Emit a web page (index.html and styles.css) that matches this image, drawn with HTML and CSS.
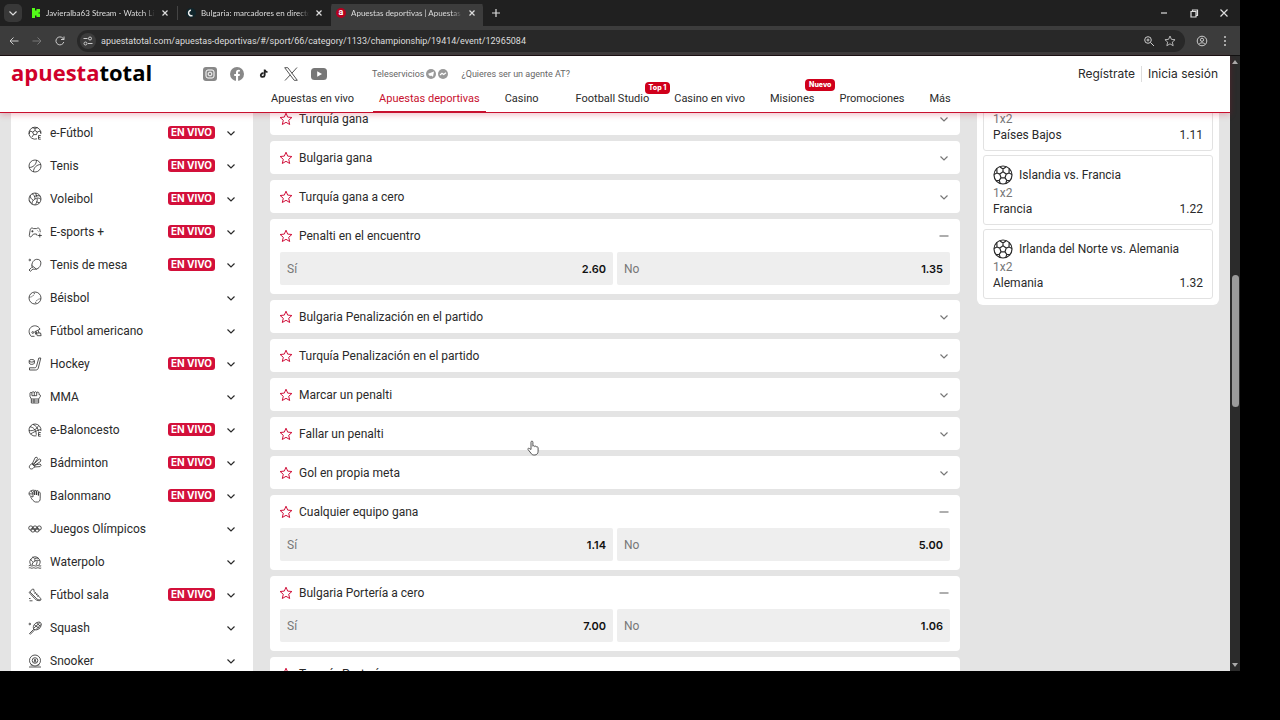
FILE: index.html
```html
<!DOCTYPE html>
<html lang="es">
<head>
<meta charset="UTF-8">
<meta name="viewport" content="width=device-width, initial-scale=1.0">
<title>Apuestas deportivas | Apuesta Total</title>
<link rel="stylesheet" href="styles.css">
</head>
<body>
    <!-- Icon shapes -->
    <svg class="sprite" aria-hidden="true">
        <symbol id="chevron" viewBox="0 0 10 10"><path d="M1.500 3.500 5 7l3.500-3.500"/></symbol>
        <symbol id="minus" viewBox="0 0 10 10"><path d="M.5 5h9"/></symbol>
        <symbol id="close" viewBox="0 0 10 10"><path d="m2.500 2.500 5 5m0-5-5 5"/></symbol>
        <symbol id="star" viewBox="0 0 14 14"><path d="m7 1.200 1.700 3.900 4.200.4-3.200 2.800 1 4.200L7 10.300l-3.700 2.200 1-4.200L1.100 5.500l4.200-.4z"/></symbol>
        <symbol id="football" viewBox="0 0 20 20"><circle cx="10" cy="10" r="9"/><path d="m10 6.800 3.200 2.300-1.200 3.700H8L6.800 9.100zM10 6.800V4m3.200 5.100L16 8m-4 4.800 1.800 2.600M8 12.800l-1.800 2.600M6.800 9.100 4 8M6.700 1.700 10 4l3.300-2.300M1 9.500 4 8l-.2-4.500m12.400 0L16 8l3 1.500m-2 6-3.200-.1-1.100 3.200m-5.400 0-1.100-3.200-3.200.1"/></symbol>
        <symbol id="s-efootball" viewBox="0 0 14 14"><path d="M9 12.800A6 6 0 1 1 12.900 8M7 4.500 9.300 6l-.8 2.600H5.600L4.700 6zM7 4.500V2.300M4.700 6 2 5m3.600 3.600L4 11m5.300-5L12 5M4.300 1.700 7 2.300l2.700-.6M1 8l1-3m10 0 .8 2M12.800 9.500h-2.300v3.700h2.300m-2.300-1.800h2"/></symbol>
        <symbol id="s-tennis" viewBox="0 0 14 14"><circle cx="7" cy="7" r="6"/><path d="M1.200 8.500C5 8.500 8.500 5.500 8.500 1.200M5.500 12.800c0-4.300 3.500-7.300 7.300-7.300"/></symbol>
        <symbol id="s-volley" viewBox="0 0 14 14"><circle cx="7" cy="7" r="6"/><path d="M7 7c0-2.500-1-4.500-3-5.200M7 7c2.200-1.300 4.500-1.300 6 .5M7 7c-2.200 1.300-3.400 3.300-2.800 5.300M6.500 4.500C8.500 3.200 11 3.300 12.300 4.500M9.200 6.800c.3 2.500-.7 4.500-2.400 6M5.300 8.300C3.200 7.200 2 5.300 2.400 3.400M9 5.200 7.600 1.100M8.300 9.800l3.200 1M3 10.800 1.200 8.500"/></symbol>
        <symbol id="s-esports" viewBox="0 0 14 14"><path d="M9 10.500 8.500 9h-3L3.300 11.600c-.9.700-2.200.2-2-1.200l.8-5C2.300 3.700 3 3 4.200 3l1.300.6h3L9.800 3c1.200 0 2 .7 2.200 2.400l.3 1.800M3.300 6.300h2.200M4.400 5.200v2.200M9 5.500h.4m.8 1.200h.4M11.800 8.500v4M9.800 10.500h4"/></symbol>
        <symbol id="s-table" viewBox="0 0 14 14"><circle cx="1.800" cy="2" r=".8"/><path d="M4.500 10C2.800 7 4.600 1.700 8.700 1.300c3.100-.2 4.600 2 4.100 4.700-.6 3.800-4.300 6.200-7.800 5L2.300 13.300 1 12l2.600-2.500M3.600 7.300l5 4"/></symbol>
        <symbol id="s-baseball" viewBox="0 0 14 14"><circle cx="7" cy="7" r="6"/><path d="M1.300 6.200c2.900 0 5-1.900 5.300-5M12.700 7.800c-2.900 0-5 1.900-5.300 5" stroke-dasharray="1.200 .8"/></symbol>
        <symbol id="s-nfl" viewBox="0 0 14 14"><path d="M6.500 12.300H3.200C.5 9.500.5 5.700 2.700 3.500 5.500.8 10.300 1.300 12 5.200L6.800 7.700l1.200 3M8 7.200l1.200 4.500h3.900l-.5-2.700H7.500m2.700-2.600.8 2.600"/><circle cx="4.800" cy="8.500" r=".9"/></symbol>
        <symbol id="s-hockey" viewBox="0 0 14 14"><path d="M10.800 1h2L10.300 11c-.4 1.500-1.200 2-2.700 2H1.500v-2.200h5c1.100 0 1.700-.4 2-1.500z"/><ellipse cx="3.800" cy="3.800" rx="2.600" ry="1.300"/><path d="M1.200 3.800v2.300c0 1.700 5.200 1.700 5.200 0V3.800"/></symbol>
        <symbol id="s-mma" viewBox="0 0 14 14"><path d="M3.300 9 2 6.500V3.200c0-1 1.800-1.200 1.900 0 0-2 2.400-2 2.400 0 0-2 2.400-2 2.400 0 .1-1.600 2.300-1.400 2.300.2v1.300h.7c1 0 1 2 0 2.700L10.700 9zM3.900 3.200v2.500m2.400-2.500v2.500m2.400-2.500v2.500H4M3.300 9v4h7.400V9M3.300 11h7.400M6 9v4"/></symbol>
        <symbol id="s-ebasket" viewBox="0 0 14 14"><path d="M8.500 12.800A6 6 0 1 1 12.900 8M2 3.800c3 .2 6.300 3 6.300 8M1 7.500c4.500.8 8-1.500 9.500-5M5 1.400c2.800 1.200 5 3.500 5.500 7M2.500 11C5 9.500 8.500 7.500 12.800 6.500M12.800 9.500h-2.300v3.700h2.300m-2.300-1.800h2"/></symbol>
        <symbol id="s-badminton" viewBox="0 0 14 14"><path d="M4 8.300 7.200 1.600l1.700-.4.700 1.400L5.200 9m1-1.300L11.300 3l1.500.8-.3 1.700L6 9.700m1.300-.8 4.900-.9.900 1.300-1 1.300-6 .4M3.600 7.700l3.100 3-1.500 1.600c-2.400 2-5.200-.7-3.200-3zM4.600 7l2.800 3"/></symbol>
        <symbol id="s-handball" viewBox="0 0 14 14"><path d="M5 8V3.200c0-1.200 1.700-1.200 1.700 0V6 2.300c0-1.200 1.900-1.200 1.900 0V6 2.500c0-1.200 1.800-1.200 1.800 0V6.500 4c0-1.200 1.800-1.200 1.800 0v5.600c0 2-1 3.400-2.600 3.400H7.400C6 13 3.500 9.800 3 8.700c-.6-1.200.7-1.800 1.300-1zM3.200 7.500C.5 6.500.4 3.300 2.500 2c1.800-1.200 4-1 5 0M1.200 4.800 5 5M3 2l2 2.500"/></symbol>
        <symbol id="s-olympic" viewBox="0 0 14 14"><circle cx="2.800" cy="6" r="2.100"/><circle cx="7" cy="6" r="2.100"/><circle cx="11.200" cy="6" r="2.100"/><circle cx="4.900" cy="8" r="2.100"/><circle cx="9.100" cy="8" r="2.100"/></symbol>
        <symbol id="s-waterpolo" viewBox="0 0 14 14"><path d="M3 10a5 5 0 1 1 8 0M7 6c0-2-1-3.500-2.500-4M7 6c2-1 3.600-1 4.800 0M7 6C5 7 4 8.500 4.200 10.300M7 3.600c1.400-.7 2.700-.7 3.700-.2M9 5.600c.3 1.700-.2 3.300-1 4.400M5.300 7C4 6.400 3 5.200 2.700 4M.8 10.800c1.500-1.200 2.500 1 4 0s2.500 1 4 0 2.700 1 4.400 0M.8 13c1.500-1.200 2.500 1 4 0s2.500 1 4 0 2.700 1 4.400 0"/></symbol>
        <symbol id="s-shoe" viewBox="0 0 14 14"><path d="M1.300 4.500 4.500 1l1.300.3.400 2.300 5.900 6.200c1.300 1.200 1 2.700-.4 2.800-2.200.2-3.600-.5-5-2L2 5.500zM1.800 3.900l7 6.900c1 1 2.300 1.100 3.700.9M6.500 5.500l1.300-1M8 7l1.300-1M9.400 8.500l1.200-1M1 10.500h1.500M1.500 12.800h3"/></symbol>
        <symbol id="s-squash" viewBox="0 0 14 14"><circle cx="1.800" cy="3" r=".8"/><path d="M5.800 8.200c-1-1.700-.4-4 1.300-5.500 2-1.800 4.600-2 5.500-1 1.100 1 .7 3.600-1 5.500-1.600 1.700-4 2.300-5.800 1zM5.800 8.200 5 9 1.500 12.500M6.600 8.900l-.8.900L2.300 13.300l-.8-.8M6.500 4l5 3.500M8.500 2l4 3.300M6 7l6-5.500M8 8.500l5-5"/></symbol>
        <symbol id="s-snooker" viewBox="0 0 14 14"><circle cx="7" cy="6.500" r="5.500"/><circle cx="7" cy="6.500" r="2.800"/><circle cx="7" cy="5.900" r=".7"/><circle cx="7" cy="7.400" r=".8"/><path d="M1 13h12M2.500 11h2m5 0h2"/></symbol>
    </svg>

    <div class="window">
        <!-- Browser tabs -->
        <div class="tab-bar">
            <button class="tab-search" aria-label="Buscar pestañas"><svg class="ic-sm"><use href="#chevron"/></svg></button>
            <div class="tab">
                <svg class="favicon" viewBox="0 0 10 10"><path fill="#53fc18" d="M1 0h3v2.500h1.500V1H9v3.500H7.500v1H9V9H5.500V7.500H4V10H1z"/></svg>
                <span class="tab-title">Javieralba63 Stream - Watch Li</span>
                <button class="tab-close" aria-label="Cerrar"><svg class="ic-sm"><use href="#close"/></svg></button>
            </div>
            <div class="tab tab-divided">
                <svg class="favicon" viewBox="0 0 10 10"><circle cx="5" cy="5" r="5" fill="#10252b"/><path fill="none" stroke="#eee" stroke-width="1.500" d="M6.500 7.500C4 8.500 2.400 6.500 2.600 4.500 2.800 3 4 2.200 5 2.400"/></svg>
                <span class="tab-title">Bulgaria: marcadores en directo</span>
                <button class="tab-close" aria-label="Cerrar"><svg class="ic-sm"><use href="#close"/></svg></button>
            </div>
            <div class="tab tab-active">
                <span class="favicon favicon-a">a</span>
                <span class="tab-title">Apuestas deportivas | Apuestas</span>
                <button class="tab-close" aria-label="Cerrar"><svg class="ic-sm"><use href="#close"/></svg></button>
            </div>
            <button class="tab-new" aria-label="Nueva pestaña"><svg class="ic-sm" viewBox="0 0 10 10"><path d="M5 1v8M1 5h8"/></svg></button>
            <div class="window-controls">
                <button aria-label="Minimizar"><svg class="ic-sm" viewBox="0 0 10 10"><path d="M2 5h6"/></svg></button>
                <button aria-label="Restaurar"><svg class="ic-sm" viewBox="0 0 10 10"><path d="M2 3.500h5V9H2zM3.500 3.500V2h5v5.500H7"/></svg></button>
                <button aria-label="Cerrar ventana"><svg class="ic-sm" viewBox="0 0 10 10"><path d="m1.500 1.500 7 7m0-7-7 7"/></svg></button>
            </div>
        </div>

        <!-- Address bar -->
        <div class="address-bar">
            <button aria-label="Atrás"><svg class="ic-md" viewBox="0 0 12 12"><path d="M10.500 6H2m3.500-3.500L2 6l3.500 3.500"/></svg></button>
            <button class="is-dim" aria-label="Adelante"><svg class="ic-md" viewBox="0 0 12 12"><path d="M1.500 6H10M6.500 2.500 10 6 6.500 9.500"/></svg></button>
            <button aria-label="Recargar"><svg class="ic-md" viewBox="0 0 12 12"><path d="M9.800 7A4 4 0 1 1 9 3.300l1 1M10 1.500v3H7"/></svg></button>
            <div class="url-box">
                <span class="site-info"><svg class="ic-md" viewBox="0 0 12 12"><path d="M1.500 3.500h4M6 8.500h4.500"/><circle cx="8" cy="3.500" r="1.500"/><circle cx="3.500" cy="8.500" r="1.500"/></svg></span>
                <input class="url" type="text" aria-label="Dirección" value="apuestatotal.com/apuestas-deportivas/#/sport/66/category/1133/championship/19414/event/12965084">
                <button aria-label="Zoom"><svg class="ic-md" viewBox="0 0 12 12"><circle cx="5" cy="5" r="3.300"/><path d="m7.500 7.500 3.500 3.500M3.500 5h3M5 3.500v3"/></svg></button>
                <button aria-label="Marcador"><svg class="ic-md"><use href="#star"/></svg></button>
            </div>
            <button aria-label="Perfil"><svg class="ic-md" viewBox="0 0 12 12"><circle cx="6" cy="6" r="4.800"/><circle cx="6" cy="4.800" r="1.600"/><path d="M2.800 9.300c1.500-2 4.900-2 6.400 0"/></svg></button>
            <button aria-label="Menú"><svg class="ic-md ic-dots" viewBox="0 0 12 12"><circle cx="6" cy="2" r="1"/><circle cx="6" cy="6" r="1"/><circle cx="6" cy="10" r="1"/></svg></button>
        </div>

        <div class="viewport">
            <div class="site">
                <!-- Site header -->
                <header class="header">
                    <a class="logo" href="#"><span>apuesta</span>total</a>
                    <div class="header-center">
                        <div class="header-top">
                            <a href="#" aria-label="Instagram"><svg class="social" viewBox="0 0 14 14"><rect width="14" height="14" rx="3" fill="#888"/><rect x="3" y="3" width="8" height="8" rx="2" fill="none" stroke="#fff"/><circle cx="7" cy="7" r="1.900" fill="none" stroke="#fff"/></svg></a>
                            <a href="#" aria-label="Facebook"><svg class="social" viewBox="0 0 14 14"><circle cx="7" cy="7" r="7" fill="#888"/><path fill="#fff" d="M6 14V9H4.200V7H6V5.500C6 3.700 7 2.800 8.600 2.800l1.300.1v1.700h-.8c-.8 0-1 .4-1 1V7h1.800l-.3 2H8.100v5z"/></svg></a>
                            <a href="#" aria-label="TikTok"><svg class="social" viewBox="0 0 14 14"><path fill="none" stroke="#222" stroke-width="1.800" d="M6.500 6.300C4.700 6 3.600 7.200 3.800 8.500c.3 2 3.700 2 3.900-.4V2.500c.2 1.500 1.200 2.500 2.800 2.700"/></svg></a>
                            <a href="#" aria-label="X"><svg class="social" viewBox="0 0 14 14"><path fill="none" stroke="#555" d="M.7.700h3.100l9.500 12.600h-3.100zM13 .5 7.800 6.300M6.300 7.800 1 13.500"/></svg></a>
                            <a href="#" aria-label="YouTube"><svg class="social social-wide" viewBox="0 0 16 14"><rect y="1" width="16" height="12" rx="3.500" fill="#777"/><path fill="#fff" d="M6.200 4.300v5.400L11 7z"/></svg></a>
                            <a class="top-link tele" href="#"><span>Teleservicios</span>
                                <svg class="tele-icon" viewBox="0 0 10 10"><circle cx="5" cy="5" r="5" fill="#999"/><path fill="#fff" d="m2 4.800 6-2.300-1 5.300-2-1.300-1 .8z"/></svg>
                                <svg class="tele-icon" viewBox="0 0 10 10"><circle cx="5" cy="5" r="5" fill="#999"/><path fill="none" stroke="#fff" stroke-width="1.200" d="m2 6 2-1.800 1.700 1.300L8 3.800"/></svg>
                            </a>
                            <a class="top-link" href="#">¿Quieres ser un agente AT?</a>
                        </div>
                        <nav class="nav">
                            <a href="#">Apuestas en vivo</a>
                            <a class="nav-active" href="#">Apuestas deportivas</a>
                            <a class="nav-casino" href="#">Casino</a>
                            <a href="#">Football Studio<span class="tag">Top 1</span></a>
                            <a href="#">Casino en vivo</a>
                            <a href="#">Misiones<span class="tag tag-high">Nuevo</span></a>
                            <a href="#">Promociones</a>
                            <a href="#">Más</a>
                        </nav>
                    </div>
                    <div class="auth">
                        <a href="#">Regístrate</a>
                        <a href="#">Inicia sesión</a>
                    </div>
                </header>

                <div class="columns">
                    <!-- Sports list -->
                    <aside class="sports">
                        <button class="sport"><svg class="sport-icon"><use href="#s-efootball"/></svg>e-Fútbol<span class="live">EN VIVO</span><svg class="ic-sm"><use href="#chevron"/></svg></button>
                        <button class="sport"><svg class="sport-icon"><use href="#s-tennis"/></svg>Tenis<span class="live">EN VIVO</span><svg class="ic-sm"><use href="#chevron"/></svg></button>
                        <button class="sport"><svg class="sport-icon"><use href="#s-volley"/></svg>Voleibol<span class="live">EN VIVO</span><svg class="ic-sm"><use href="#chevron"/></svg></button>
                        <button class="sport"><svg class="sport-icon"><use href="#s-esports"/></svg>E-sports +<span class="live">EN VIVO</span><svg class="ic-sm"><use href="#chevron"/></svg></button>
                        <button class="sport"><svg class="sport-icon"><use href="#s-table"/></svg>Tenis de mesa<span class="live">EN VIVO</span><svg class="ic-sm"><use href="#chevron"/></svg></button>
                        <button class="sport"><svg class="sport-icon"><use href="#s-baseball"/></svg>Béisbol<svg class="ic-sm"><use href="#chevron"/></svg></button>
                        <button class="sport"><svg class="sport-icon"><use href="#s-nfl"/></svg>Fútbol americano<svg class="ic-sm"><use href="#chevron"/></svg></button>
                        <button class="sport"><svg class="sport-icon"><use href="#s-hockey"/></svg>Hockey<span class="live">EN VIVO</span><svg class="ic-sm"><use href="#chevron"/></svg></button>
                        <button class="sport"><svg class="sport-icon"><use href="#s-mma"/></svg>MMA<svg class="ic-sm"><use href="#chevron"/></svg></button>
                        <button class="sport"><svg class="sport-icon"><use href="#s-ebasket"/></svg>e-Baloncesto<span class="live">EN VIVO</span><svg class="ic-sm"><use href="#chevron"/></svg></button>
                        <button class="sport"><svg class="sport-icon"><use href="#s-badminton"/></svg>Bádminton<span class="live">EN VIVO</span><svg class="ic-sm"><use href="#chevron"/></svg></button>
                        <button class="sport"><svg class="sport-icon"><use href="#s-handball"/></svg>Balonmano<span class="live">EN VIVO</span><svg class="ic-sm"><use href="#chevron"/></svg></button>
                        <button class="sport"><svg class="sport-icon"><use href="#s-olympic"/></svg>Juegos Olímpicos<svg class="ic-sm"><use href="#chevron"/></svg></button>
                        <button class="sport"><svg class="sport-icon"><use href="#s-waterpolo"/></svg>Waterpolo<svg class="ic-sm"><use href="#chevron"/></svg></button>
                        <button class="sport"><svg class="sport-icon"><use href="#s-shoe"/></svg>Fútbol sala<span class="live">EN VIVO</span><svg class="ic-sm"><use href="#chevron"/></svg></button>
                        <button class="sport"><svg class="sport-icon"><use href="#s-squash"/></svg>Squash<svg class="ic-sm"><use href="#chevron"/></svg></button>
                        <button class="sport"><svg class="sport-icon"><use href="#s-snooker"/></svg>Snooker<svg class="ic-sm"><use href="#chevron"/></svg></button>
                    </aside>

                    <!-- Markets -->
                    <main class="markets">
                        <section class="market">
                            <div class="market-head"><button class="fav" aria-label="Favorito"><svg class="star"><use href="#star"/></svg></button><button class="toggle">Turquía gana<svg class="ic-sm"><use href="#chevron"/></svg></button></div>
                        </section>
                        <section class="market">
                            <div class="market-head"><button class="fav" aria-label="Favorito"><svg class="star"><use href="#star"/></svg></button><button class="toggle">Bulgaria gana<svg class="ic-sm"><use href="#chevron"/></svg></button></div>
                        </section>
                        <section class="market">
                            <div class="market-head"><button class="fav" aria-label="Favorito"><svg class="star"><use href="#star"/></svg></button><button class="toggle">Turquía gana a cero<svg class="ic-sm"><use href="#chevron"/></svg></button></div>
                        </section>
                        <section class="market">
                            <div class="market-head"><button class="fav" aria-label="Favorito"><svg class="star"><use href="#star"/></svg></button><button class="toggle">Penalti en el encuentro<svg class="ic-sm"><use href="#minus"/></svg></button></div>
                            <div class="outcomes">
                                <button class="outcome">Sí<b>2.60</b></button>
                                <button class="outcome">No<b>1.35</b></button>
                            </div>
                        </section>
                        <section class="market">
                            <div class="market-head"><button class="fav" aria-label="Favorito"><svg class="star"><use href="#star"/></svg></button><button class="toggle">Bulgaria Penalización en el partido<svg class="ic-sm"><use href="#chevron"/></svg></button></div>
                        </section>
                        <section class="market">
                            <div class="market-head"><button class="fav" aria-label="Favorito"><svg class="star"><use href="#star"/></svg></button><button class="toggle">Turquía Penalización en el partido<svg class="ic-sm"><use href="#chevron"/></svg></button></div>
                        </section>
                        <section class="market">
                            <div class="market-head"><button class="fav" aria-label="Favorito"><svg class="star"><use href="#star"/></svg></button><button class="toggle">Marcar un penalti<svg class="ic-sm"><use href="#chevron"/></svg></button></div>
                        </section>
                        <section class="market">
                            <div class="market-head"><button class="fav" aria-label="Favorito"><svg class="star"><use href="#star"/></svg></button><button class="toggle">Fallar un penalti<svg class="ic-sm"><use href="#chevron"/></svg></button></div>
                        </section>
                        <section class="market">
                            <div class="market-head"><button class="fav" aria-label="Favorito"><svg class="star"><use href="#star"/></svg></button><button class="toggle">Gol en propia meta<svg class="ic-sm"><use href="#chevron"/></svg></button></div>
                        </section>
                        <section class="market">
                            <div class="market-head"><button class="fav" aria-label="Favorito"><svg class="star"><use href="#star"/></svg></button><button class="toggle">Cualquier equipo gana<svg class="ic-sm"><use href="#minus"/></svg></button></div>
                            <div class="outcomes">
                                <button class="outcome">Sí<b>1.14</b></button>
                                <button class="outcome">No<b>5.00</b></button>
                            </div>
                        </section>
                        <section class="market">
                            <div class="market-head"><button class="fav" aria-label="Favorito"><svg class="star"><use href="#star"/></svg></button><button class="toggle">Bulgaria Portería a cero<svg class="ic-sm"><use href="#minus"/></svg></button></div>
                            <div class="outcomes">
                                <button class="outcome">Sí<b>7.00</b></button>
                                <button class="outcome">No<b>1.06</b></button>
                            </div>
                        </section>
                        <section class="market">
                            <div class="market-head"><button class="fav" aria-label="Favorito"><svg class="star"><use href="#star"/></svg></button><button class="toggle">Turquía Portería a cero</button></div>
                        </section>
                    </main>

                    <!-- Featured bets -->
                    <aside class="bets">
                        <article class="bet bet-first">
                            <p class="bet-type">1x2</p>
                            <p class="bet-pick">Países Bajos<span>1.11</span></p>
                        </article>
                        <article class="bet">
                            <h3 class="bet-title"><svg class="ball"><use href="#football"/></svg>Islandia vs. Francia</h3>
                            <p class="bet-type">1x2</p>
                            <p class="bet-pick">Francia<span>1.22</span></p>
                        </article>
                        <article class="bet">
                            <h3 class="bet-title"><svg class="ball"><use href="#football"/></svg>Irlanda del Norte vs. Alemania</h3>
                            <p class="bet-type">1x2</p>
                            <p class="bet-pick">Alemania<span>1.32</span></p>
                        </article>
                    </aside>
                </div>
            </div>

            <!-- Scrollbar -->
            <div class="scrollbar">
                <svg class="arrow" viewBox="0 0 8 8"><path d="m4 2 3 4H1z"/></svg>
                <div class="track"><div class="thumb"></div></div>
                <svg class="arrow" viewBox="0 0 8 8"><path d="m4 6 3-4H1z"/></svg>
            </div>
        </div>
    </div>

    <svg class="cursor" viewBox="0 0 12 16"><path fill="#fff" stroke="#555" d="M4 9.500V2.200c0-1.500 1.900-1.500 1.900 0v4c.3-.8 1.700-.6 1.800.3.400-.7 1.700-.4 1.700.5.500-.5 1.700-.2 1.700.8v3.400c0 2-1.200 3.800-3.200 3.800H6.800c-1.400 0-2.300-.8-3-2L1 9.500c-.5-1 .6-1.700 1.400-1z"/></svg>
</body>
</html>
```

FILE: styles.css
```css
/* General Styles */
* {
    margin: 0;
    padding: 0;
    box-sizing: border-box;
}

body {
    height: 100vh;
    padding: 0 40px 49px 0;
    background: #000;
    color: #2a2a2a;
    font-family: Roboto, sans-serif;
    font-size: 12px;
    overflow: hidden;
}

a {
    color: inherit;
    text-decoration: none;
}

button {
    display: flex;
    align-items: center;
    border: none;
    background: none;
    color: inherit;
    font: inherit;
    cursor: pointer;
}

svg {
    flex: none;
    fill: none;
    stroke: currentColor;
}

svg [fill]:not([stroke]) {
    stroke: none;
}

.sprite {
    position: absolute;
    width: 0;
    height: 0;
}

.ic-sm {
    width: 10px;
    height: 10px;
    stroke-width: 1.2;
}

.ic-md {
    width: 12px;
    height: 12px;
}

.window {
    display: flex;
    flex-direction: column;
    height: 100%;
}

/* Browser tabs */
.tab-bar {
    display: flex;
    align-items: center;
    height: 26px;
    padding-left: 4px;
    background: #202020;
    color: #ddd;
}

.tab-search {
    justify-content: center;
    width: 18px;
    height: 18px;
    margin-right: 1px;
    border-radius: 5px;
    background: #383838;
}

.tab {
    display: flex;
    align-items: center;
    gap: 5px;
    width: 154px;
    height: 22px;
    padding: 0 7px 0 8px;
}

.tab-divided {
    border-left: 1px solid #444;
    height: 14px;
}

.tab-active {
    height: 26px;
    width: 152px;
    padding: 4px 6px 4px 5px;
    border-radius: 7px 7px 0 0;
    background: linear-gradient(#202020 4px, #3c3c3c 4px);
}

.favicon {
    flex: none;
    width: 10px;
    height: 10px;
}

.favicon-a {
    border-radius: 5px;
    background: #b5001f;
    color: #fff;
    font-size: 9px;
    font-weight: 700;
    line-height: 9px;
    text-align: center;
}

.tab-title {
    flex: 1;
    overflow: hidden;
    font-family: Lato, sans-serif;
    font-size: 8px;
    line-height: 14px;
    white-space: nowrap;
    -webkit-mask-image: linear-gradient(to right, #000 90%, transparent);
    mask-image: linear-gradient(to right, #000 90%, transparent);
}

.tab-new {
    margin-left: 8px;
}

.window-controls {
    display: flex;
    gap: 20px;
    margin-left: auto;
    padding-right: 11px;
}

/* Address bar */
.address-bar {
    display: flex;
    align-items: center;
    gap: 11px;
    height: 30px;
    padding: 0 9px 0 8px;
    border-bottom: 1px solid #111;
    background: #3c3c3c;
    color: #ccc;
}

.address-bar .is-dim {
    color: #777;
}

.url-box {
    display: flex;
    flex: 1;
    align-items: center;
    gap: 9px;
    height: 22px;
    padding: 0 9px 0 3px;
    border-radius: 11px;
    background: #282828;
}

.site-info {
    display: flex;
    margin-right: -4px;
    padding: 2px;
    border-radius: 8px;
    background: #3c3c3c;
}

.url {
    flex: 1;
    border: none;
    outline: none;
    background: none;
    color: #ddd;
    font-family: Roboto, sans-serif;
    font-size: 9px;
}

.address-bar .ic-dots {
    fill: currentColor;
    stroke: none;
}

/* Page area */
.viewport {
    display: flex;
    flex: 1;
    min-height: 0;
}

.site {
    display: flex;
    flex: 1;
    flex-direction: column;
    min-width: 0;
    background: #e4e4e4;
}

/* Header */
.header {
    position: relative;
    z-index: 1;
    display: flex;
    flex: none;
    height: 57px;
    padding: 0 12px 0 11px;
    border-bottom: 1px solid #c8102e;
    background: #fff;
    box-shadow: 0 2px 6px rgba(200, 16, 46, 0.25);
}

.logo {
    width: 192px;
    color: #000;
    font-family: "Open Sans", sans-serif;
    font-size: 22px;
    font-weight: 700;
    line-height: 32px;
}

.logo span {
    color: #d0002b;
}

.header-center {
    display: flex;
    flex: 1;
    flex-direction: column;
    justify-content: space-between;
}

.header-top {
    display: flex;
    align-items: center;
    gap: 13px;
    height: 36px;
}

.header-top a {
    display: flex;
}

.social {
    width: 14px;
    height: 14px;
}

.social-wide {
    width: 16px;
}

.header-top .top-link {
    align-items: center;
    gap: 2px;
    color: #666;
    font-size: 9px;
}

.header-top .tele {
    margin-left: 32px;
}

.tele-icon {
    width: 10px;
    height: 10px;
}

.nav {
    display: flex;
    gap: 13px;
    padding-left: 62px;
}

.nav a {
    position: relative;
    padding: 0 6px 5px;
    border-bottom: 1px solid transparent;
    font-size: 11px;
    line-height: 15px;
}

.nav .nav-active {
    border-color: #c8102e;
    color: #c8102e;
}

.nav .nav-casino {
    margin-right: 12px;
}

.tag {
    position: absolute;
    right: -15px;
    top: -9px;
    padding: 0 4px;
    border-radius: 4px;
    background: #d0001b;
    color: #fff;
    font-family: Inter, sans-serif;
    font-size: 7px;
    font-weight: 800;
    line-height: 12px;
}

.tag-high {
    top: -12px;
}

.auth {
    display: flex;
    padding-top: 10px;
    font-family: Inter, sans-serif;
    line-height: 16px;
}

.auth a + a {
    height: 16px;
    margin-left: 6px;
    padding-left: 6px;
    border-left: 1px solid #ddd;
}

/* Columns */
.columns {
    display: flex;
    flex: 1;
    gap: 17px;
    align-items: flex-start;
    min-height: 0;
    margin-top: -11px;
    padding: 0 11px;
    overflow: hidden;
}

/* Sports list */
.sports {
    width: 242px;
    padding-top: 14px;
    background: #fff;
}

.sport {
    gap: 8px;
    width: 100%;
    height: 33px;
    padding: 0 17px;
}

.sport-icon {
    width: 14px;
    height: 14px;
    stroke-width: 0.8;
}

.sport .ic-sm {
    margin-left: auto;
}

.live {
    margin-left: auto;
    margin-right: 3px;
    padding: 0 3px;
    border-radius: 3px;
    background: #d3103a;
    color: #fff;
    font-family: Inter, sans-serif;
    font-size: 10px;
    font-weight: 700;
    line-height: 13px;
}

.sport .live + .ic-sm {
    margin-left: 0;
}

/* Markets */
.markets {
    display: flex;
    flex: 1;
    flex-direction: column;
    gap: 6px;
}

.market {
    border-radius: 4px;
    background: #fff;
}

.market-head {
    display: flex;
    height: 33px;
    padding: 0 11px 0 9px;
}

.star {
    width: 14px;
    height: 14px;
    color: #d0103a;
}

.toggle {
    flex: 1;
    justify-content: space-between;
    padding-left: 6px;
}

.toggle .ic-sm {
    color: #777;
}

.outcomes {
    display: flex;
    gap: 4px;
    padding: 0 10px 9px;
}

.outcome {
    flex: 1;
    justify-content: space-between;
    height: 33px;
    padding: 0 7px;
    border-radius: 2px;
    background: #eee;
    color: #777;
}

.outcome b {
    color: #111;
    font-family: Inter, sans-serif;
    font-size: 11px;
    font-weight: 600;
}

/* Featured bets */
.bets {
    display: flex;
    flex-direction: column;
    gap: 4px;
    width: 242px;
    padding: 6px;
    border-radius: 0 0 6px 6px;
    background: #fff;
}

.bet {
    padding: 9px 9px 7px;
    border: 1px solid #e2e2e2;
    border-radius: 3px;
    line-height: 16px;
}

.bet-first {
    padding-top: 2px;
}

.bet-title {
    display: flex;
    gap: 6px;
    align-items: center;
    height: 20px;
    font-size: 12px;
    font-weight: 400;
}

.ball {
    width: 20px;
    height: 20px;
    stroke-width: 1.2;
}

.bet-type {
    color: #777;
}

.bet-pick {
    display: flex;
    justify-content: space-between;
}

/* Scrollbar */
.scrollbar {
    display: flex;
    flex-direction: column;
    align-items: center;
    width: 10px;
    padding: 2px 0;
    background: #2b2b2b;
}

.arrow {
    width: 8px;
    height: 8px;
    fill: #aaa;
    stroke: none;
}

.track {
    flex: 1;
    padding-top: 209px;
}

.thumb {
    width: 7px;
    height: 132px;
    border-radius: 4px;
    background: #9b9b9b;
}

/* Pointer */
.cursor {
    position: absolute;
    left: 527px;
    top: 440px;
    width: 12px;
    height: 16px;
}
```
